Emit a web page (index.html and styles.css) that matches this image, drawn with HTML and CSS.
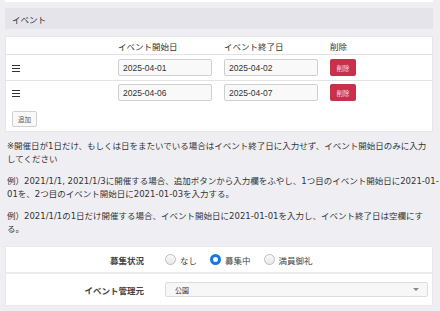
FILE: index.html
```html
<!DOCTYPE html>
<html lang="ja">
<head>
<meta charset="utf-8">
<link rel="stylesheet" href="styles.css">
</head>
<body>
<div class="page">
  <div class="prev-card"></div>
  <div class="section-head">イベント</div>
  <div class="event-card">
    <div class="ev-row ev-head">
      <div></div>
      <div>イベント開始日</div>
      <div>イベント終了日</div>
      <div>削除</div>
    </div>
    <div class="ev-row ev-item">
      <div class="handle"><span></span><span></span><span></span></div>
      <div><input class="date" type="text" value="2025-04-01"></div>
      <div><input class="date" type="text" value="2025-04-02"></div>
      <div><button class="del">削除</button></div>
    </div>
    <div class="ev-row ev-item last">
      <div class="handle"><span></span><span></span><span></span></div>
      <div><input class="date" type="text" value="2025-04-06"></div>
      <div><input class="date" type="text" value="2025-04-07"></div>
      <div><button class="del">削除</button></div>
    </div>
    <div class="add-wrap"><button class="add">追加</button></div>
  </div>
  <div class="notes">
    <p>※開催日が1日だけ、もしくは日をまたいでいる場合はイベント終了日に入力せず、イベント開始日のみに入力<br>してください</p>
    <p>例）2021/1/1, 2021/1/3に開催する場合、追加ボタンから入力欄をふやし、1つ目のイベント開始日に2021-01-<br>01を、2つ目のイベント開始日に2021-01-03を入力する。</p>
    <p>例）2021/1/1の1日だけ開催する場合、イベント開始日に2021-01-01を入力し、イベント終了日は空欄にす<br>る。</p>
  </div>
  <div class="form-card">
    <div class="form-row">
      <div class="label">募集状況</div>
      <div class="radios">
        <label class="radio"><span class="circle"></span>なし</label>
        <label class="radio"><span class="circle on"></span>募集中</label>
        <label class="radio"><span class="circle"></span>満員御礼</label>
      </div>
    </div>
    <div class="form-row tall">
      <div class="label">イベント管理元</div>
      <div class="select"><span>公園</span><span class="caret"></span></div>
    </div>
  </div>
</div>
</body>
</html>
```
FILE: styles.css
```css
html, body {
  margin: 0;
  padding: 0;
  background: #efeff3;
}
body {
  font-family: "Liberation Sans", "Noto Sans CJK JP", sans-serif;
  color: #333;
  font-size: 8.5px;
}
.page {
  width: 428px;
  margin-left: 5px;
}
.prev-card {
  height: 2px;
  background: #fff;
}
.section-head {
  margin-top: 6px;
  height: 21px;
  background: #e4e4ea;
  display: flex;
  align-items: center;
  padding-left: 7px;
  font-size: 8.5px;
  color: #333;
}
.event-card {
  margin-top: 7px;
  background: #fff;
  border: 1px solid #e6e6e6;
  height: 96px;
  box-sizing: border-box;
}
.ev-row {
  display: grid;
  grid-template-columns: 106px 106px 106px 1fr;
  padding-left: 6px;
  align-items: center;
}
.ev-head {
  height: 17px;
  border-bottom: 1px solid #e3e3e3;
  color: #333;
}
.ev-item {
  height: 25px;
  border-bottom: 1px solid #e3e3e3;
}
.ev-item.last {
  border-bottom: none;
  height: 23px;
}
.handle {
  display: flex;
  flex-direction: column;
  gap: 1.5px;
  width: 8px;
  margin-top: 2px;
}
.handle span {
  display: block;
  height: 1.3px;
  background: #333;
}
.date {
  box-sizing: border-box;
  width: 94px;
  height: 17px;
  border: 1px solid #cfcfcf;
  border-radius: 2px;
  background: #f9f9f9;
  font-family: "Liberation Sans", sans-serif;
  font-size: 8.5px;
  color: #333;
  padding: 0 4px;
  margin: 0;
}
.del {
  width: 26px;
  height: 17px;
  border: none;
  border-radius: 2px;
  background: #c8304b;
  color: #f6dfe3;
  font-family: "Noto Sans CJK JP", sans-serif;
  font-size: 6.5px;
  padding: 0;
  margin: 0;
}
.add-wrap {
  padding: 7px 0 0 6px;
}
.add {
  width: 25px;
  height: 16px;
  border: 1px solid #d0d0d0;
  border-radius: 2px;
  background: #f9f9f9;
  color: #555;
  font-family: "Noto Sans CJK JP", sans-serif;
  font-size: 6.5px;
  padding: 0;
  margin: 0;
}
.notes {
  padding: 8px 0 0 2px;
  font-family: "DejaVu Sans", "Noto Sans CJK JP", sans-serif;
  font-size: 8.5px;
  color: #333;
}
.notes p {
  margin: 0 0 10px 0;
  line-height: 12.5px;
  white-space: nowrap;
}
.form-card {
  margin-top: 11px;
  background: #fff;
  border: 1px solid #e9e9e9;
}
.form-row {
  display: flex;
  align-items: center;
  height: 25px;
  border-bottom: 2px solid #ececee;
}
.form-row.tall {
  height: 31px;
  border-bottom: none;
}
.label {
  width: 138px;
  text-align: right;
  font-weight: bold;
  color: #444;
  font-size: 8.5px;
}
.radios {
  display: flex;
  margin-left: 21px;
  gap: 13px;
}
.radio {
  display: flex;
  align-items: center;
  gap: 4px;
  color: #444;
}
.circle {
  box-sizing: border-box;
  width: 11px;
  height: 11px;
  border-radius: 50%;
  border: 1px solid #bdbdbd;
  background: linear-gradient(#fafafa, #e8e8e8);
}
.circle.on {
  border: 3px solid #1677e6;
  background: #fff;
}
.select {
  margin-left: 21px;
  width: 263px;
  height: 15px;
  box-sizing: border-box;
  border: 1px solid #dcdcdc;
  border-radius: 2px;
  background: #f7f7f7;
  display: flex;
  align-items: center;
  justify-content: space-between;
  padding: 0 8px 0 9px;
  font-size: 7px;
  color: #333;
}
.caret {
  width: 0;
  height: 0;
  border-left: 3px solid transparent;
  border-right: 3px solid transparent;
  border-top: 3px solid #888;
}
```
